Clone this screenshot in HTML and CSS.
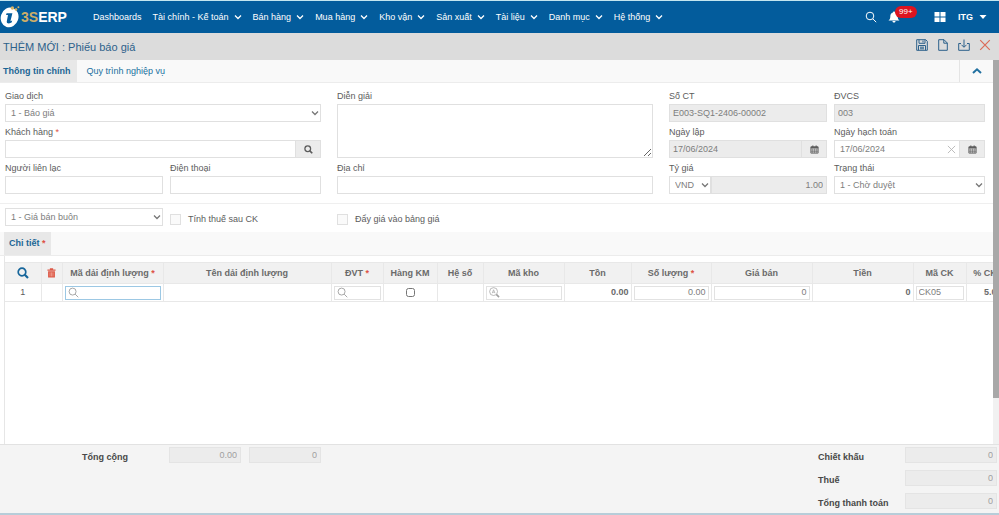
FILE: index.html
```html
<!DOCTYPE html>
<html lang="vi">
<head>
<meta charset="UTF-8">
<meta name="viewport" content="width=device-width, initial-scale=1">
<title>3SERP - Phiếu báo giá</title>
<link rel="stylesheet" href="styles.css">
</head>
<body>
<!-- icon dùng chung -->
<svg class="sprite" aria-hidden="true">
	<symbol id="i-down" viewBox="0 0 8 8"><path d="M1 2.5l3 3 3-3" fill="none" stroke="currentColor" stroke-width="1.3"/></symbol>
	<symbol id="i-search" viewBox="0 0 12 12"><circle cx="5" cy="5" r="3.8" fill="none" stroke="currentColor"/><path d="M7.8 7.8l3.4 3.4" stroke="currentColor"/></symbol>
	<symbol id="i-search-bold" viewBox="0 0 12 12"><circle cx="5" cy="5" r="3.8" fill="none" stroke="currentColor" stroke-width="1.7"/><path d="M7.8 7.8l3.2 3.2" stroke="currentColor" stroke-width="2.2"/></symbol>
	<symbol id="i-cal" viewBox="0 0 10 10"><path d="M1 2h8v7H1z" fill="none" stroke="currentColor"/><path d="M1 2h8v2H1zM2.5.5h1.3v2H2.5zM6.2.5h1.3v2H6.2z" fill="currentColor"/><path d="M1 5.6h8M1 7.3h8M3 4v5M5 4v5M7 4v5" stroke="currentColor" stroke-width=".6"/></symbol>
	<symbol id="i-x" viewBox="0 0 10 10"><path d="M1 1l8 8M9 1L1 9" fill="none" stroke="currentColor"/></symbol>
</svg>

<header class="topbar">
	<a class="logo" href="#">
		<svg class="logo-mark" viewBox="0 0 21 24">
			<ellipse cx="9.6" cy="13.4" rx="8.8" ry="10" transform="rotate(18 9.6 13.4)" fill="#fff"/>
			<path d="M6.6 9.2h5.8l-2 8 1.8-.6-.6 2c-1.8 1.2-5.4 1.4-4.8-1.4L8 11H6z" fill="#055c9c"/>
			<circle cx="12.4" cy="4" r="1.7" fill="#d9b565"/>
			<circle cx="16" cy="5.5" r="1.3" fill="#d9b565"/>
			<circle cx="18.4" cy="3.3" r="1" fill="#d9b565"/>
		</svg>
		<span class="logo-text"><b>3S</b>ERP</span>
	</a>
	<nav class="menu">
		<a href="#">Dashboards</a>
		<a href="#">Tài chính - Kế toán <svg><use href="#i-down"/></svg></a>
		<a href="#">Bán hàng <svg><use href="#i-down"/></svg></a>
		<a href="#">Mua hàng <svg><use href="#i-down"/></svg></a>
		<a href="#">Kho vận <svg><use href="#i-down"/></svg></a>
		<a href="#">Sản xuất <svg><use href="#i-down"/></svg></a>
		<a href="#">Tài liệu <svg><use href="#i-down"/></svg></a>
		<a href="#">Danh mục <svg><use href="#i-down"/></svg></a>
		<a href="#">Hệ thống <svg><use href="#i-down"/></svg></a>
	</nav>
	<div class="tools">
		<button type="button" aria-label="Tìm kiếm"><svg><use href="#i-search"/></svg></button>
		<button type="button" class="bell" aria-label="Thông báo">
			<svg viewBox="0 0 12 12"><path d="M6 .5c.7 0 1 .4 1 1 1.9.5 2.7 2 2.7 4 0 2 .5 3 1.8 4H.5c1.3-1 1.8-2 1.8-4s.8-3.5 2.7-4c0-.6.3-1 1-1zM4.500 10h3c0 1-.6 1.600-1.500 1.600S4.500 11 4.500 10z" fill="#fff"/></svg>
			<span class="badge">99+</span>
		</button>
		<button type="button" class="apps" aria-label="Ứng dụng"><svg viewBox="0 0 12 12"><path d="M.5 1h5v4.6h-5zM6.500 1h5v4.6h-5zM.5 6.4h5V11h-5zM6.500 6.4h5V11h-5z" fill="#fff"/></svg></button>
		<button type="button" class="user">ITG <svg viewBox="0 0 8 8"><path d="M.5 2h7L4 6z" fill="#fff"/></svg></button>
	</div>
</header>

<div class="titlebar">
	<h1>THÊM MỚI : Phiếu báo giá</h1>
	<div class="actions">
		<button type="button" aria-label="Lưu"><svg viewBox="0 0 12 12"><path d="M.7.7h9l1.600 1.600v9H.7zM3 .7v3.600h6V.7M7 1.500v2M2.500 11.300V6.500h7v4.800M4 8.200h4M4 9.800h4" fill="none" stroke="currentColor"/></svg></button>
		<button type="button" aria-label="Tạo mới"><svg viewBox="0 0 12 12"><path d="M1.700.7H7l3.300 3.300v7.300H1.700zM6.800.7v3.500h3.500" fill="none" stroke="currentColor"/></svg></button>
		<button type="button" aria-label="Tải xuống"><svg viewBox="0 0 12 12"><path d="M3 4.500H.7v6.800h10.600V4.500H9M6 .5v7.500M3.500 5.800L6 8.300l2.500-2.500" fill="none" stroke="currentColor"/></svg></button>
		<button type="button" class="close" aria-label="Đóng"><svg><use href="#i-x"/></svg></button>
	</div>
</div>

<div class="workspace">
	<main class="content">
		<div class="tabs">
			<a class="tab active" href="#">Thông tin chính</a>
			<a class="tab" href="#">Quy trình nghiệp vụ</a>
			<button type="button" class="collapse" aria-label="Thu gọn"><svg viewBox="0 0 10 8"><path d="M1 6l4-3.700L9 6" fill="none" stroke="currentColor" stroke-width="2"/></svg></button>
		</div>

		<form class="form">
			<!-- cột trái -->
			<div class="col">
				<div class="field wide">
					<label for="giaodich">Giao dịch</label>
					<div class="select"><select id="giaodich"><option>1 - Báo giá</option></select><svg><use href="#i-down"/></svg></div>
				</div>
				<div class="field wide">
					<label for="khachhang">Khách hàng <i>*</i></label>
					<div class="group"><input type="text" id="khachhang"><button type="button" aria-label="Tìm khách hàng"><svg><use href="#i-search-bold"/></svg></button></div>
				</div>
				<div class="field">
					<label for="lienlac">Người liên lạc</label>
					<input type="text" id="lienlac">
				</div>
				<div class="field">
					<label for="dienthoai">Điện thoại</label>
					<input type="text" id="dienthoai">
				</div>
			</div>

			<!-- cột giữa -->
			<div class="col">
				<div class="field wide tall">
					<label for="diengiai">Diễn giải</label>
					<textarea id="diengiai"></textarea>
				</div>
				<div class="field wide">
					<label for="diachi">Địa chỉ</label>
					<input type="text" id="diachi">
				</div>
			</div>

			<!-- cột phải -->
			<div class="col">
				<div class="field">
					<label for="soct">Số CT</label>
					<input type="text" id="soct" value="E003-SQ1-2406-00002" readonly>
				</div>
				<div class="field">
					<label for="dvcs">ĐVCS</label>
					<input type="text" id="dvcs" value="003" readonly>
				</div>
				<div class="field">
					<label for="ngaylap">Ngày lập</label>
					<div class="group"><input type="text" id="ngaylap" value="17/06/2024" readonly><button type="button" aria-label="Chọn ngày lập"><svg><use href="#i-cal"/></svg></button></div>
				</div>
				<div class="field">
					<label for="hachtoan">Ngày hạch toán</label>
					<div class="group"><input type="text" id="hachtoan" value="17/06/2024"><button type="button" class="clear" aria-label="Xóa ngày"><svg><use href="#i-x"/></svg></button><button type="button" aria-label="Chọn ngày hạch toán"><svg><use href="#i-cal"/></svg></button></div>
				</div>
				<div class="field">
					<label for="tygia">Tỷ giá</label>
					<div class="group">
						<div class="select currency"><select aria-label="Loại tiền"><option>VND</option></select><svg><use href="#i-down"/></svg></div>
						<input type="text" id="tygia" class="num" value="1.00" readonly>
					</div>
				</div>
				<div class="field">
					<label for="trangthai">Trạng thái</label>
					<div class="select"><select id="trangthai"><option>1 - Chờ duyệt</option></select><svg><use href="#i-down"/></svg></div>
				</div>
			</div>
		</form>

		<div class="options">
			<div class="col">
				<div class="select"><select aria-label="Loại giá"><option>1 - Giá bán buôn</option></select><svg><use href="#i-down"/></svg></div>
				<label class="check"><input type="checkbox">Tính thuế sau CK</label>
			</div>
			<label class="check"><input type="checkbox">Đẩy giá vào bảng giá</label>
		</div>

		<div class="tabs detail-tabs">
			<a class="tab active" href="#">Chi tiết <i>*</i></a>
		</div>

		<div class="grid-box">
			<table class="grid">
				<colgroup>
					<col class="w-no"><col class="w-del"><col class="w-code"><col class="w-name"><col class="w-unit"><col class="w-promo"><col class="w-rate"><col class="w-store"><col class="w-stock"><col class="w-qty"><col class="w-price"><col class="w-price"><col class="w-disc"><col class="w-pct">
				</colgroup>
				<thead>
					<tr>
						<th><svg class="th-search"><use href="#i-search-bold"/></svg></th>
						<th><svg class="th-trash" viewBox="0 0 10 11"><path d="M.5 1.500h9v1.600h-9zM3.200.3h3.600v1.500H3.200zM1.200 3.600h7.600v7H1.200z" fill="currentColor"/><path d="M3.400 4.800v4.500M5 4.800v4.500M6.600 4.800v4.500" stroke="#f6b5a9" stroke-width=".7"/></svg></th>
						<th>Mã dải định lượng <i>*</i></th>
						<th>Tên dải định lượng</th>
						<th>ĐVT <i>*</i></th>
						<th>Hàng KM</th>
						<th>Hệ số</th>
						<th>Mã kho</th>
						<th>Tồn</th>
						<th>Số lượng <i>*</i></th>
						<th>Giá bán</th>
						<th>Tiền</th>
						<th>Mã CK</th>
						<th>% CK</th>
					</tr>
				</thead>
				<tbody>
					<tr>
						<td class="center">1</td>
						<td></td>
						<td><div class="lookup focus"><svg><use href="#i-search"/></svg><input type="text" aria-label="Mã dải định lượng"></div></td>
						<td></td>
						<td><div class="lookup"><svg><use href="#i-search"/></svg><input type="text" aria-label="ĐVT"></div></td>
						<td class="center"><input type="checkbox" class="tick" aria-label="Hàng KM"></td>
						<td></td>
						<td><div class="lookup"><svg viewBox="0 0 12 12"><circle cx="5" cy="5" r="4.300" fill="none" stroke="currentColor" stroke-width=".8"/><path d="M3.500 6.800L5 3l1.500 3.800M4 5.700h2" fill="none" stroke="currentColor" stroke-width=".7"/><path d="M8 8l3 3" stroke="currentColor" stroke-width="1.700"/></svg><input type="text" aria-label="Mã kho"></div></td>
						<td class="total">0.00</td>
						<td><input type="text" class="cell num" value="0.00" aria-label="Số lượng"></td>
						<td><input type="text" class="cell num" value="0" aria-label="Giá bán"></td>
						<td class="total">0</td>
						<td><input type="text" class="cell" value="CK05" aria-label="Mã CK"></td>
						<td class="total">5.00</td>
					</tr>
				</tbody>
			</table>
		</div>
	</main>
	<div class="scrollbar"><div class="thumb"></div></div>
</div>

<footer class="summary">
	<div class="sum-left">
		<label for="tongsl">Tổng cộng</label>
		<input type="text" id="tongsl" class="num" value="0.00" readonly>
		<input type="text" class="num" value="0" aria-label="Tổng tiền" readonly>
	</div>
	<div class="sum-right">
		<label for="chietkhau">Chiết khấu</label>
		<input type="text" id="chietkhau" class="num" value="0" readonly>
		<label for="thue">Thuế</label>
		<input type="text" id="thue" class="num" value="0" readonly>
		<label for="thanhtoan">Tổng thanh toán</label>
		<input type="text" id="thanhtoan" class="num" value="0" readonly>
	</div>
</footer>
</body>
</html>
```
FILE: styles.css
```css
*{
	margin: 0;
	padding: 0;
	box-sizing: border-box;
}
body{
	height: 100vh;
	display: flex;
	flex-direction: column;
	overflow: hidden;
	background: #fff;
	color: #5c5c5c;
	font: 9px/15px "Liberation Sans", Arial, sans-serif;
}
a{
	color: inherit;
	text-decoration: none;
}
button{
	border: 0;
	background: none;
	font: inherit;
	color: inherit;
	display: flex;
	align-items: center;
	justify-content: center;
}
svg{
	display: block;
	flex: none;
}
i{
	color: #dd5145;
	font-style: normal;
}
.sprite{
	position: absolute;
	width: 0;
	height: 0;
}

/* thanh trên cùng */
.topbar{
	height: 33px;
	flex: none;
	display: flex;
	align-items: center;
	background: #035c9c;
	border-top: 1px solid #c3e6f0;
	color: #fff;
}
.logo{
	width: 93px;
	display: flex;
	align-items: center;
}
.logo-mark{
	width: 21px;
	height: 24px;
	margin-bottom: 2px;
}
.logo-text{
	font-size: 14px;
	font-weight: bold;
}
.logo-text b{
	color: #cdae68;
}
.menu{
	flex: 1;
	display: flex;
	gap: 11px;
	white-space: nowrap;
}
.menu a{
	display: flex;
	align-items: center;
	gap: 5px;
}
.menu svg{
	width: 8px;
	height: 8px;
}
.tools{
	display: flex;
	align-items: center;
	padding-right: 12px;
}
.tools svg{
	width: 12px;
	height: 12px;
}
.tools .bell{
	position: relative;
	margin-left: 11px;
}
.badge{
	position: absolute;
	left: 7px;
	top: -5px;
	padding: 0 4px;
	border-radius: 6px;
	background: #dc1420;
	font-size: 8px;
	line-height: 12px;
}
.tools .apps{
	margin-left: 34px;
}
.tools .user{
	margin-left: 12px;
	gap: 6px;
	font-weight: bold;
}
.tools .user svg{
	width: 8px;
	height: 8px;
}

/* tiêu đề phiếu */
.titlebar{
	height: 27px;
	flex: none;
	display: flex;
	align-items: center;
	justify-content: space-between;
	padding: 0 8px 0 3px;
	background: #dcdcdc;
	color: #2c618b;
}
.titlebar h1{
	padding-top: 1px;
	font-size: 11px;
	font-weight: normal;
}
.actions{
	display: flex;
	gap: 9px;
	padding-bottom: 3px;
}
.actions svg{
	width: 12px;
	height: 12px;
}
.actions .close{
	color: #dc6b58;
}

.workspace{
	flex: 1;
	min-height: 0;
	display: flex;
}
.content{
	flex: 1;
	min-width: 0;
	display: flex;
	flex-direction: column;
}
.scrollbar{
	width: 6px;
	background: #f1f1f1;
}
.thumb{
	height: 88%;
	background: #a8a8a8;
}

.tabs{
	height: 23px;
	flex: none;
	display: flex;
	background: #f9f9f9;
	border-bottom: 1px solid #ececec;
	color: #2170a0;
}
.tab{
	padding: 0 9px;
	line-height: 23px;
}
.tab.active{
	padding: 0 7px 0 3px;
	background: #e8e8e8;
	color: #1b6595;
	font-weight: bold;
}
.collapse{
	width: 34px;
	margin-left: auto;
	border-left: 1px solid #e4e4e4;
}
.collapse svg{
	width: 10px;
	height: 8px;
}

/* khung nhập liệu */
.form,
.options{
	flex: none;
	display: grid;
	grid-template-columns: repeat(3, 1fr);
	column-gap: 16px;
	padding: 6px 8px 9px 5px;
	border-bottom: 1px solid #efefef;
}
.col{
	display: grid;
	grid-template-columns: 158fr 151fr;
	gap: 3px 7px;
	min-width: 0;
}
.field{
	display: flex;
	flex-direction: column;
	min-width: 0;
}
.field.wide{
	grid-column: 1 / 3;
}
.field.tall{
	grid-row: span 2;
}
.field.tall textarea{
	height: 54px;
}
input,
select,
textarea{
	width: 100%;
	min-width: 0;
	height: 18px;
	padding: 0 5px;
	border: 1px solid #e0e0e0;
	border-radius: 0;
	background: #fff;
	color: #7d7d7d;
	font: inherit;
	outline: 0;
}
input[readonly]{
	padding: 0 3px;
	background: #ececec;
}
.num{
	text-align: right;
}
.select{
	position: relative;
	width: 100%;
}
.select select{
	appearance: none;
	display: block;
}
.select svg{
	position: absolute;
	right: 2px;
	top: 5px;
	width: 8px;
	height: 8px;
	color: #777;
	pointer-events: none;
}
.currency{
	width: 42px;
	flex: none;
}
.group{
	display: flex;
}
.group button{
	width: 25px;
	flex: none;
	border: 1px solid #e0e0e0;
	border-left: 0;
	background: #ececec;
}
.group button svg{
	width: 9px;
	height: 9px;
}
.group .clear{
	width: 17px;
	margin-left: -1px;
	background: #fff;
	color: #b5b5b5;
}

.options{
	padding: 4px 8px 5px 5px;
	border-bottom: 0;
}
.check{
	display: flex;
	align-items: center;
	gap: 7px;
	padding-top: 4px;
}
.check input{
	appearance: none;
	width: 11px;
	height: 11px;
	padding: 0;
	background: #fafafa;
}

/* bảng chi tiết */
.detail-tabs{
	height: 24px;
	padding-left: 4px;
}
.detail-tabs .tab.active{
	padding: 0 5px;
}
.grid-box{
	flex: 1;
	margin-left: 4px;
	padding-top: 6px;
	overflow: hidden;
	border-left: 1px solid #e6e6e6;
}
.grid{
	width: 999px;
	table-layout: fixed;
	border-collapse: collapse;
}
.w-no{ width: 36px; }
.w-del{ width: 21px; }
.w-code{ width: 101px; }
.w-name{ width: 168px; }
.w-unit{ width: 52px; }
.w-promo{ width: 54px; }
.w-rate{ width: 46px; }
.w-store{ width: 81px; }
.w-stock{ width: 67px; }
.w-qty{ width: 80px; }
.w-price{ width: 101px; }
.w-disc{ width: 53px; }
.w-pct{ width: 38px; }
.grid th,
.grid td{
	border: 1px solid #e8e8e8;
	border-left: 0;
	white-space: nowrap;
}
.grid th{
	height: 21px;
	background: #f1f1f1;
	color: #6a6a6a;
	text-align: center;
}
.grid td{
	height: 18px;
	padding: 0 2px;
}
.grid th svg{
	margin: 0 auto;
}
.th-search{
	width: 12px;
	height: 12px;
	color: #17669b;
}
.th-trash{
	width: 9px;
	height: 10px;
	color: #dd5a48;
}
.grid .center{
	text-align: center;
}
.grid .total{
	color: #6a6a6a;
	text-align: right;
	font-weight: bold;
}
.cell,
.lookup{
	display: flex;
	height: 14px;
	border: 1px solid #e2e2e2;
	padding: 0 2px;
}
.lookup{
	align-items: center;
	color: #a0a0a0;
}
.lookup.focus{
	border-color: #9cc8e4;
}
.lookup svg{
	width: 11px;
	height: 11px;
}
.lookup input{
	height: 12px;
	border: 0;
	background: none;
}
.grid .tick{
	display: block;
	width: 9px;
	height: 9px;
	margin: 0 auto;
}

/* tổng cộng cuối phiếu */
.summary{
	height: 71px;
	flex: none;
	display: flex;
	justify-content: space-between;
	padding: 2px 2px 0 82px;
	background: #f4f4f4;
	border-top: 1px solid #e2e2e2;
	border-bottom: 2px solid #b7cdd9;
	color: #484848;
	font-weight: bold;
}
.summary label{
	padding-top: 3px;
}
.summary input{
	height: 16px;
	border-color: #e4e4e4;
	color: #a0a0a0;
	font-weight: normal;
}
.sum-left{
	display: grid;
	grid-template-columns: 79px 72px 72px;
	align-items: start;
	column-gap: 8px;
}
.sum-right{
	display: grid;
	grid-template-columns: 87px 92px;
	grid-auto-rows: 23px;
}
```
